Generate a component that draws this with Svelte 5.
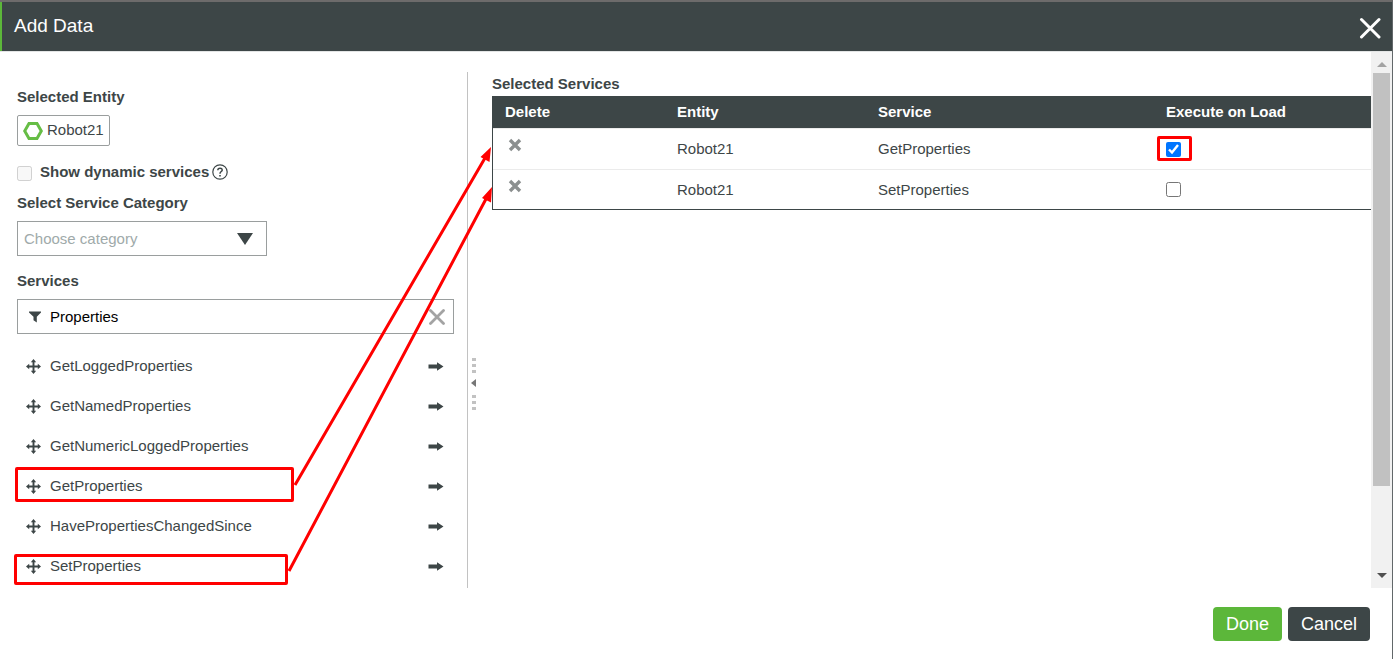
<script>
  const services = [
    { name: 'GetLoggedProperties' },
    { name: 'GetNamedProperties' },
    { name: 'GetNumericLoggedProperties' },
    { name: 'GetProperties', mark: 'mark-get' },
    { name: 'HavePropertiesChangedSince' },
    { name: 'SetProperties', mark: 'mark-set' }
  ];
  let selected = $state([
    { entity: 'Robot21', service: 'GetProperties', onLoad: true, marked: true },
    { entity: 'Robot21', service: 'SetProperties', onLoad: false, marked: false }
  ]);
  let filter = $state('Properties');
</script>

<div class="dialog">
  <header>
    <h1>Add Data</h1>
    <button class="plain" aria-label="Close">
      <svg width="22" height="22" viewBox="0 0 22 22"><path d="M2.500 2.500L20 20M20 2.500L2.500 20" stroke="#fff" stroke-width="3" stroke-linecap="round" /></svg>
    </button>
  </header>

  <div class="body">
    <section class="source">
      <h2>Selected Entity</h2>
      <div class="entity">
        <svg width="20" height="18" viewBox="0 0 20 18"><path d="M6 1.500h8L18.300 9L14 16.500H6L1.700 9z" fill="none" stroke="#66bd45" stroke-width="3" /></svg>
        <span>Robot21</span>
      </div>

      <div class="dynamic">
        <input type="checkbox" id="dynamic" disabled />
        <label for="dynamic">Show dynamic services</label>
        <svg width="16" height="16" viewBox="0 0 16 16" fill="none" stroke="#3d4647">
          <circle cx="8" cy="8" r="7.200" stroke-width="1.200" />
          <path d="M5.800 6.300C5.800 3.400 10.300 3.500 10.200 6.100C10.100 7.600 8 7.600 8 9.700" stroke-width="1.500" />
          <path d="M8 10.900v1.600" stroke-width="1.600" />
        </svg>
      </div>

      <label class="title" for="category">Select Service Category</label>
      <div class="select">
        <select id="category"><option>Choose category</option></select>
        <svg width="16" height="12" viewBox="0 0 16 12"><path d="M0 0h16L8 12z" fill="#3d4647" /></svg>
      </div>

      <label class="title services-title" for="filter">Services</label>
      <div class="filter">
        <svg width="12" height="12" viewBox="0 0 12 12"><path d="M0 .5h12v1L7.800 5.800V11.500L4.500 9.300V5.800L0 1.500z" fill="#3d4647" /></svg>
        <input id="filter" type="text" bind:value={filter} />
        <button class="plain" aria-label="Clear filter" onclick={() => (filter = '')}>
          <svg width="16" height="16" viewBox="0 0 16 16"><path d="M1.500 1.500L14.500 14.500M14.500 1.500L1.500 14.500" stroke="#a3a3a3" stroke-width="2.800" stroke-linecap="round" /></svg>
        </button>
      </div>

      <ul>
        {#each services as s}
          <li>
            <svg width="15" height="15" viewBox="0 0 14 14" fill="#3d4647"><path d="M7 0L9.500 3H7.900V6.100H11V4.500L14 7L11 9.500V7.900H7.900V11H9.500L7 14L4.500 11H6.100V7.900H3V9.500L0 7L3 4.500V6.100H6.100V3H4.500z" /></svg>
            <span>{s.name}</span>
            <button class="plain" aria-label={'Add ' + s.name}>
              <svg width="16" height="9" viewBox="0 0 16 9"><path d="M.5 2.500H9V.2L15.500 4.500L9 8.800V6.500H.5z" fill="#3d4647" /></svg>
            </button>
            {#if s.mark}<i class="mark {s.mark}"></i>{/if}
          </li>
        {/each}
      </ul>
    </section>

    <div class="splitter">
      <svg width="6" height="52" viewBox="0 0 6 52">
        <path d="M1 0h4v3H1zM1 6h4v3H1zM1 12h4v3H1zM1 37h4v3H1zM1 43h4v3H1zM1 49h4v3H1z" fill="#c2c2c2" />
        <path d="M5 21v8L0 25z" fill="#777" />
      </svg>
    </div>

    <section class="target">
      <h2>Selected Services</h2>
      <table>
        <thead>
          <tr><th class="c-delete">Delete</th><th class="c-entity">Entity</th><th class="c-service">Service</th><th>Execute on Load</th></tr>
        </thead>
        <tbody>
          {#each selected as row}
            <tr>
              <td>
                <button class="plain delete" aria-label={'Delete ' + row.service}>
                  <svg width="14" height="14" viewBox="0 0 14 14"><path d="M2 2L12 12M12 2L2 12" stroke="#8b8f8f" stroke-width="3.400" /></svg>
                </button>
              </td>
              <td>{row.entity}</td>
              <td>{row.service}</td>
              <td>
                <span class="tick">
                  <input type="checkbox" bind:checked={row.onLoad} aria-label={'Execute ' + row.service + ' on load'} />
                  {#if row.marked}<i class="mark mark-tick"></i>{/if}
                </span>
              </td>
            </tr>
          {/each}
        </tbody>
      </table>
    </section>

    <div class="scrollbar">
      <svg width="10" height="5" viewBox="0 0 10 5"><path d="M0 5L5 0L10 5z" fill="#a3a3a3" /></svg>
      <div class="thumb"></div>
      <svg class="down" width="10" height="5" viewBox="0 0 10 5"><path d="M0 0h10L5 5z" fill="#505050" /></svg>
    </div>
  </div>

  <footer>
    <button class="done">Done</button>
    <button class="cancel">Cancel</button>
  </footer>

  <svg class="arrows" width="500" height="600" viewBox="0 0 500 600">
    <path d="M295 485L485 158M289 571L487 197" stroke="#f00" stroke-width="3" />
    <path d="M491 147L489.500 162L480.500 157zM492 187L491 202.500L482 198z" fill="#f00" />
  </svg>
</div>

<style>
  :global(body) {
    margin: 0;
    background: #fff;
  }
  .dialog {
    position: relative;
    display: flex;
    flex-direction: column;
    min-height: 100vh;
    box-sizing: border-box;
    border-top: 2px solid #6d6b6b;
    border-right: 1px solid #62686a;
    font: 15px/20px "Liberation Sans", Arial, sans-serif;
    color: #3d4647;
  }
  svg {
    display: block;
    flex: none;
  }
  h1, h2, ul {
    margin: 0;
    padding: 0;
  }
  h2, .title, .dynamic label {
    display: block;
    font-size: 15px;
    font-weight: 700;
  }
  .plain {
    padding: 0;
    border: 0;
    background: none;
    cursor: pointer;
  }
  header {
    display: flex;
    align-items: center;
    justify-content: space-between;
    height: 49px;
    padding: 0 11px 0 12px;
    border-left: 2px solid #5cb73a;
    background: #3d4647;
    color: #fff;
  }
  header .plain {
    padding-top: 2px;
  }
  h1 {
    padding-bottom: 2px;
    font-size: 19px;
    line-height: 24px;
    font-weight: 400;
  }
  .body {
    flex: 1;
    display: flex;
    border-top: 1px solid #e3e5e5;
  }
  .source {
    width: 437px;
    flex: none;
    padding: 35px 13px 2px 17px;
  }
  .entity {
    display: inline-flex;
    align-items: center;
    gap: 4px;
    height: 27px;
    margin-top: 8px;
    padding: 0 5px 2px;
    border: 1px solid #9a9e9e;
    border-radius: 2px;
    vertical-align: top;
  }
  .entity svg {
    margin-top: 2px;
  }
  .dynamic {
    display: flex;
    align-items: center;
    margin: 16px 0 11px;
  }
  .dynamic input {
    width: 15px;
    height: 15px;
    margin: 2px 8px 0 0;
  }
  .dynamic svg {
    margin-left: 3px;
  }
  .select {
    position: relative;
    width: 250px;
    margin-top: 8px;
  }
  .select select {
    display: block;
    appearance: none;
    width: 100%;
    height: 35px;
    padding: 0 6px;
    border: 1px solid #9a9e9e;
    border-radius: 0;
    background: #fff;
    color: #a0aaaa;
    font: inherit;
  }
  .select svg {
    position: absolute;
    right: 14px;
    top: 12px;
    pointer-events: none;
  }
  .services-title {
    margin-top: 15px;
  }
  .filter {
    display: flex;
    align-items: center;
    gap: 9px;
    height: 33px;
    margin-top: 8px;
    padding: 0 8px 0 11px;
    border: 1px solid #9a9e9e;
  }
  .filter input {
    flex: 1;
    min-width: 0;
    padding: 0;
    border: 0;
    outline: 0;
    background: none;
    color: #000;
    font: inherit;
  }
  ul {
    margin-top: 12px;
    list-style: none;
  }
  li {
    position: relative;
    display: flex;
    align-items: center;
    gap: 9px;
    height: 40px;
    padding: 0 10px 0 9px;
  }
  li span {
    flex: 1;
  }
  .mark {
    position: absolute;
    border: 3px solid #f00;
    border-radius: 2px;
    pointer-events: none;
  }
  .mark-get {
    inset: 1px 160px 4px -2px;
  }
  .mark-set {
    inset: 8px 166px 1px -3px;
  }
  .mark-tick {
    inset: -6px -11px -4px -9px;
  }
  .splitter {
    width: 20px;
    flex: none;
    box-sizing: border-box;
    margin-top: 20px;
    padding: 286px 0 0 3px;
    border-left: 1px solid #c2c2c2;
  }
  .target {
    flex: 1;
    min-width: 0;
    padding: 22px 0 0 5px;
  }
  table {
    width: 100%;
    margin-top: 2px;
    table-layout: fixed;
    border-spacing: 0;
    border-left: 1px solid #3d4647;
    border-bottom: 1px solid #3d4647;
  }
  th, td {
    box-sizing: border-box;
    padding: 0 0 0 12px;
    text-align: left;
  }
  th {
    height: 33px;
    border-bottom: 1px solid #ebebeb;
    background: #3d4647;
    background-clip: padding-box;
    color: #fff;
  }
  td {
    height: 40px;
  }
  tr + tr td {
    border-top: 1px solid #ebebeb;
  }
  .c-delete {
    width: 172px;
  }
  .c-entity {
    width: 201px;
  }
  .c-service {
    width: 288px;
  }
  .delete {
    display: block;
    margin: 0 3px 8px;
  }
  .tick {
    position: relative;
    display: block;
    width: 15px;
    height: 15px;
  }
  .tick input {
    display: block;
    width: 15px;
    height: 15px;
    margin: 0;
  }
  .scrollbar {
    display: flex;
    flex-direction: column;
    align-items: center;
    width: 21px;
    flex: none;
    padding: 10px 0;
    box-sizing: border-box;
    background: #f1f1f1;
  }
  .thumb {
    flex: none;
    width: 17px;
    height: 80%;
    margin-top: 6px;
    background: #c1c1c1;
  }
  .down {
    margin-top: auto;
  }
  footer {
    display: flex;
    justify-content: flex-end;
    gap: 6px;
    padding: 19px 22px 18px;
  }
  footer button {
    height: 34px;
    padding: 0 13px;
    border: 0;
    border-radius: 4px;
    color: #fff;
    font: 18px/24px "Liberation Sans", Arial, sans-serif;
    cursor: pointer;
  }
  .done {
    background: #5cb73a;
  }
  .cancel {
    background: #3d4647;
  }
  .arrows {
    position: absolute;
    left: 0;
    top: -2px;
    pointer-events: none;
  }
</style>
